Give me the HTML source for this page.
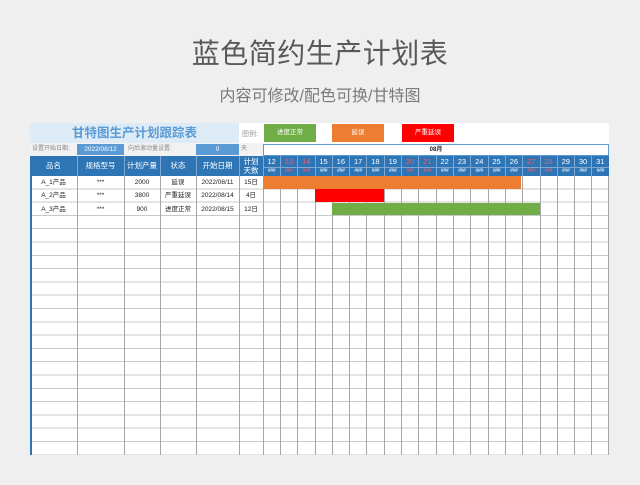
<!DOCTYPE html>
<html><head><meta charset="utf-8"><style>
*{margin:0;padding:0;box-sizing:border-box}
body{width:640px;height:485px;background:#efefef;position:relative;overflow:hidden;font-family:"Liberation Sans","Noto Sans CJK SC",sans-serif}
.a{position:absolute}
.c{position:absolute;text-align:center;white-space:nowrap;line-height:1}
.vl{position:absolute;top:176px;height:279px;width:1px;background:#a6a6a6}
.hv{position:absolute;top:156px;height:20px;width:1px;background:#7fa7d3}
.t{font-size:6.5px;color:#222;line-height:8px}
.dn{font-size:7.5px;color:#fff;top:158px;width:17.3px}
.dh{font-size:5px;color:#fff;top:169px;width:17.3px;letter-spacing:-0.3px}
.r{color:#ff5a5a}
</style></head><body>
<div class="c" style="left:0;width:640px;top:40px;font-size:28px;color:#595959;letter-spacing:0.5px">蓝色简约生产计划表</div>
<div class="c" style="left:0;width:640px;top:89px;font-size:16px;color:#7a7a7a">内容可修改/配色可换/甘特图</div>

<div class="a" style="left:30px;top:123px;width:579px;height:332px;background:#fff"></div>
<div class="a" style="left:30px;top:123px;width:209px;height:20px;background:#ddebf7"></div>
<div class="c" style="left:30px;width:209px;top:127px;font-size:12.5px;color:#5b9bd5;font-weight:bold">甘特图生产计划跟踪表</div>
<div class="a" style="left:242px;top:129px;font-size:7px;color:#999">图例:</div>
<div class="c" style="left:264px;top:124px;width:52px;height:18px;background:#70ad47;color:#fff;font-size:6.5px;line-height:18px">进度正常</div>
<div class="c" style="left:332px;top:124px;width:52px;height:18px;background:#ed7d31;color:#fff;font-size:6.5px;line-height:18px">延误</div>
<div class="c" style="left:402px;top:124px;width:52px;height:18px;background:#ff0000;color:#fff;font-size:6.5px;line-height:18px">严重延误</div>

<div class="a" style="left:30px;top:143px;width:233px;height:13px;background:#f2f2f2"></div>
<div class="a" style="left:32px;top:146px;font-size:6px;color:#888;line-height:1">设置开始日期:</div>
<div class="c" style="left:77px;top:144px;width:47px;height:11px;background:#5b9bd5;color:#fff;font-size:6.5px;line-height:11px">2022/08/12</div>
<div class="a" style="left:128px;top:146px;font-size:6px;color:#888;line-height:1">向后滚动量设置:</div>
<div class="c" style="left:196px;top:144px;width:43px;height:11px;background:#5b9bd5;color:#fff;font-size:6.5px;line-height:11px">0</div>
<div class="a" style="left:241px;top:146px;font-size:6px;color:#888;line-height:1">天</div>
<div class="c" style="left:263px;top:144px;width:346px;height:12px;border:1px solid #5b9bd5;background:#fff;font-size:6px;font-weight:bold;line-height:10px;color:#222">08月</div>

<div class="a" style="left:30px;top:156px;width:579px;height:20px;background:#2e75b6"></div>
<div class="a" style="left:263px;top:167px;width:346px;height:1px;background:#7fa7d3"></div>
<div class="c" style="left:30px;width:47px;top:162px;font-size:7.5px;color:#fff">品名</div>
<div class="c" style="left:77px;width:47px;top:162px;font-size:7.5px;color:#fff">规格型号</div>
<div class="c" style="left:124px;width:36px;top:162px;font-size:7.5px;color:#fff">计划产量</div>
<div class="c" style="left:160px;width:36px;top:162px;font-size:7.5px;color:#fff">状态</div>
<div class="c" style="left:196px;width:43px;top:162px;font-size:7.5px;color:#fff">开始日期</div>
<div class="c" style="left:239px;width:24px;top:157px;font-size:7.5px;color:#fff;line-height:9px">计划<br>天数</div>

<div class="a" style="left:30px;top:176px;width:579px;height:279px;background:repeating-linear-gradient(to bottom,transparent 0,transparent 12.3px,#c8c8c8 12.3px,#c8c8c8 13.3px)"></div>

<div class="vl" style="left:30px;width:2px;background:#2e75b6"></div>
<div class="vl" style="left:77px"></div><div class="vl" style="left:124px"></div><div class="vl" style="left:160px"></div><div class="vl" style="left:196px"></div><div class="vl" style="left:239px"></div><div class="vl" style="left:263px"></div>
<div class="vl" style="left:280px"></div><div class="vl" style="left:297px"></div><div class="vl" style="left:315px"></div><div class="vl" style="left:332px"></div><div class="vl" style="left:349px"></div><div class="vl" style="left:366px"></div><div class="vl" style="left:384px"></div><div class="vl" style="left:401px"></div><div class="vl" style="left:418px"></div><div class="vl" style="left:436px"></div><div class="vl" style="left:453px"></div><div class="vl" style="left:470px"></div><div class="vl" style="left:488px"></div><div class="vl" style="left:505px"></div><div class="vl" style="left:522px"></div><div class="vl" style="left:540px"></div><div class="vl" style="left:557px"></div><div class="vl" style="left:574px"></div><div class="vl" style="left:591px"></div><div class="vl" style="left:608px"></div>

<div class="a" style="left:263px;top:176px;width:258px;height:12.5px;background:#ed7d31"></div>
<div class="a" style="left:315px;top:189.3px;width:69px;height:12.5px;background:#ff0000"></div>
<div class="a" style="left:332px;top:202.6px;width:208px;height:12.5px;background:#70ad47"></div>

<div class="hv" style="left:77px"></div><div class="hv" style="left:124px"></div><div class="hv" style="left:160px"></div><div class="hv" style="left:196px"></div><div class="hv" style="left:239px"></div><div class="hv" style="left:263px"></div>
<div class="hv" style="left:280px"></div><div class="hv" style="left:297px"></div><div class="hv" style="left:315px"></div><div class="hv" style="left:332px"></div><div class="hv" style="left:349px"></div><div class="hv" style="left:366px"></div><div class="hv" style="left:384px"></div><div class="hv" style="left:401px"></div><div class="hv" style="left:418px"></div><div class="hv" style="left:436px"></div><div class="hv" style="left:453px"></div><div class="hv" style="left:470px"></div><div class="hv" style="left:488px"></div><div class="hv" style="left:505px"></div><div class="hv" style="left:522px"></div><div class="hv" style="left:540px"></div><div class="hv" style="left:557px"></div><div class="hv" style="left:574px"></div><div class="hv" style="left:591px"></div>

<div class="c dn" style="left:263px">12</div><div class="c dn r" style="left:280.3px">13</div><div class="c dn r" style="left:297.6px">14</div><div class="c dn" style="left:314.9px">15</div><div class="c dn" style="left:332.2px">16</div><div class="c dn" style="left:349.5px">17</div><div class="c dn" style="left:366.8px">18</div><div class="c dn" style="left:384.1px">19</div><div class="c dn r" style="left:401.4px">20</div><div class="c dn r" style="left:418.7px">21</div><div class="c dn" style="left:436px">22</div><div class="c dn" style="left:453.3px">23</div><div class="c dn" style="left:470.6px">24</div><div class="c dn" style="left:487.9px">25</div><div class="c dn" style="left:505.2px">26</div><div class="c dn r" style="left:522.5px">27</div><div class="c dn r" style="left:539.8px">28</div><div class="c dn" style="left:557.1px">29</div><div class="c dn" style="left:574.4px">30</div><div class="c dn" style="left:591.7px">31</div>

<div class="c dh" style="left:263px">###</div><div class="c dh r" style="left:280.3px">###</div><div class="c dh r" style="left:297.6px">###</div><div class="c dh" style="left:314.9px">###</div><div class="c dh" style="left:332.2px">###</div><div class="c dh" style="left:349.5px">###</div><div class="c dh" style="left:366.8px">###</div><div class="c dh" style="left:384.1px">###</div><div class="c dh r" style="left:401.4px">###</div><div class="c dh r" style="left:418.7px">###</div><div class="c dh" style="left:436px">###</div><div class="c dh" style="left:453.3px">###</div><div class="c dh" style="left:470.6px">###</div><div class="c dh" style="left:487.9px">###</div><div class="c dh" style="left:505.2px">###</div><div class="c dh r" style="left:522.5px">###</div><div class="c dh r" style="left:539.8px">###</div><div class="c dh" style="left:557.1px">###</div><div class="c dh" style="left:574.4px">###</div><div class="c dh" style="left:591.7px">###</div>

<div class="c t" style="left:30px;width:47px;top:179px">A_1产品</div>
<div class="c t" style="left:77px;width:47px;top:179px">***</div>
<div class="c t" style="left:124px;width:36px;top:179px">2000</div>
<div class="c t" style="left:160px;width:36px;top:179px">延误</div>
<div class="c t" style="left:196px;width:43px;top:179px">2022/08/11</div>
<div class="c t" style="left:239px;width:24px;top:179px">15日</div>

<div class="c t" style="left:30px;width:47px;top:192.3px">A_2产品</div>
<div class="c t" style="left:77px;width:47px;top:192.3px">***</div>
<div class="c t" style="left:124px;width:36px;top:192.3px">3800</div>
<div class="c t" style="left:160px;width:36px;top:192.3px">严重延误</div>
<div class="c t" style="left:196px;width:43px;top:192.3px">2022/08/14</div>
<div class="c t" style="left:239px;width:24px;top:192.3px">4日</div>

<div class="c t" style="left:30px;width:47px;top:205.6px">A_3产品</div>
<div class="c t" style="left:77px;width:47px;top:205.6px">***</div>
<div class="c t" style="left:124px;width:36px;top:205.6px">900</div>
<div class="c t" style="left:160px;width:36px;top:205.6px">进度正常</div>
<div class="c t" style="left:196px;width:43px;top:205.6px">2022/08/15</div>
<div class="c t" style="left:239px;width:24px;top:205.6px">12日</div>
</body></html>
